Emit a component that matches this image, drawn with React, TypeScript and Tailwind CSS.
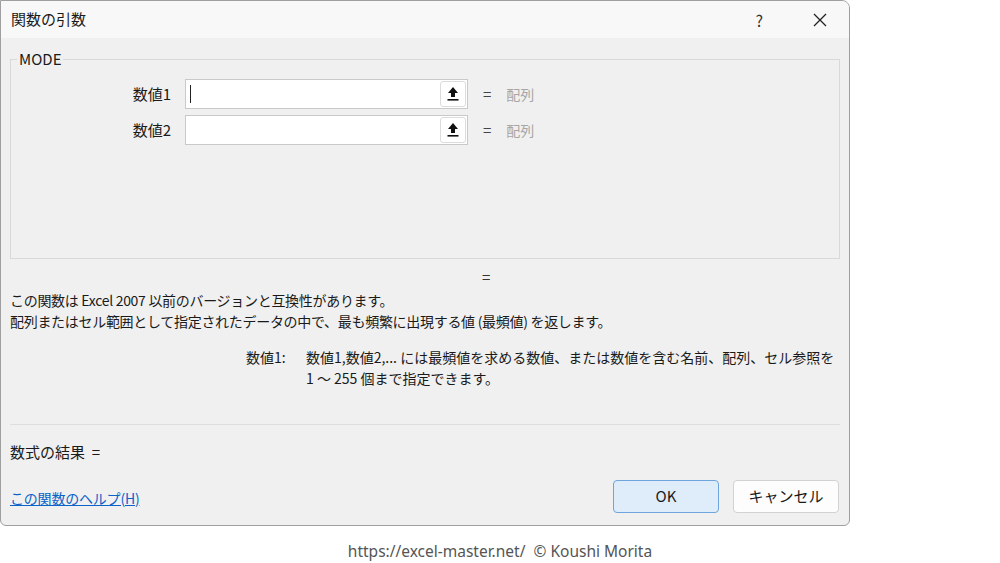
import React from "react";

const FONT = {
  fontFamily: '"Noto Sans CJK JP", "Noto Sans", sans-serif',
};

function UploadIcon() {
  return (
    <svg width="12" height="16" viewBox="0 0 12 16" aria-hidden>
      <path d="M6 1 L11 7 H8 V11 H4 V7 H1 Z" fill="#111" />
      <rect x="0.5" y="13" width="11" height="1.6" fill="#111" />
    </svg>
  );
}

function ArgRow({ label, caret }: { label: string; caret?: boolean }) {
  return (
    <div className="flex items-center h-[30px]">
      <div className="w-[174px] pr-[14px] text-right text-[15px] text-[#1a1a1a]">
        {label}
      </div>
      <div className="flex w-[283px] h-[30px] items-stretch border border-[#c9c9c9] bg-white">
        <div className="flex flex-1 items-center pl-[4px]">
          {caret && <div className="h-[18px] w-px bg-[#222]" />}
        </div>
        <div className="m-[1px] flex w-[26px] items-center justify-center rounded-[3px] border border-[#dcdcdc] bg-white">
          <UploadIcon />
        </div>
      </div>
      <span className="ml-[15px] text-[15px] text-[#444]">=</span>
      <span className="ml-[15px] text-[14px] text-[#a6a6a6]">配列</span>
    </div>
  );
}

export default function App() {
  return (
    <div className="w-[1000px] h-[563px] bg-white" style={FONT}>
      <div className="flex h-[526px] w-[850px] flex-col overflow-hidden rounded-tr-[8px] rounded-b-[6px] border border-[#9f9f9f] bg-[#f0f0f0]">
        {/* Title bar */}
        <div className="flex h-[37px] shrink-0 items-center bg-[#f8f8f8]">
          <span className="ml-[10px] text-[15px] text-[#1a1a1a]">関数の引数</span>
          <span className="ml-auto text-[16px] text-[#333]">?</span>
          <svg className="ml-[50px] mr-[22px]" width="14" height="14" viewBox="0 0 14 14">
            <path d="M1 1 L13 13 M13 1 L1 13" stroke="#222" strokeWidth="1.3" />
          </svg>
        </div>

        <div className="flex flex-1 flex-col px-[9px]">
          <fieldset className="mt-[11px] h-[210px] border border-[#d9d9d9]">
            <legend className="ml-[6px] px-[2px] text-[15px] leading-[20px] text-[#1a1a1a]">
              MODE
            </legend>
            <div className="mt-[10px] flex flex-col gap-[6px]">
              <ArgRow label="数値1" caret />
              <ArgRow label="数値2" />
            </div>
          </fieldset>

          <div className="mt-[8px] h-[20px] pl-[472px] text-[15px] leading-[20px] text-[#333]">=</div>

          <div className="mt-[3px] text-[14px] leading-[21px] tracking-[-0.3px] text-[#1a1a1a]">
            <p>この関数は Excel 2007 以前のバージョンと互換性があります。</p>
            <p>配列またはセル範囲として指定されたデータの中で、最も頻繁に出現する値 (最頻値) を返します。</p>
          </div>

          <div className="mt-[15px] flex text-[14px] leading-[21px] text-[#1a1a1a]">
            <div className="w-[296px] pl-[236px]">数値1:</div>
            <div>
              <p>数値1,数値2,... には最頻値を求める数値、または数値を含む名前、配列、セル参照を</p>
              <p>1 ～ 255 個まで指定できます。</p>
            </div>
          </div>

          <div className="mt-[35px] border-t border-[#dedede]" />

          <div className="mt-[16px] text-[15px] leading-[21px] text-[#1a1a1a]">数式の結果&nbsp;&nbsp;=</div>

          <div className="mt-[18px] flex items-center">
            <a href="#" className="mt-[3px] text-[14px] tracking-[-0.2px] text-[#0b63c9] underline">
              この関数のヘルプ(H)
            </a>
            <button className="ml-auto h-[33px] w-[106px] rounded-[4px] border border-[#6ea5dc] bg-[#dfecf9] text-[15px] text-[#1a1a1a]">
              OK
            </button>
            <button className="ml-[14px] mr-[1px] h-[33px] w-[106px] rounded-[4px] border border-[#d2d2d2] bg-[#fdfdfd] text-[15px] text-[#1a1a1a]">
              キャンセル
            </button>
          </div>
        </div>
      </div>
      <div className="mt-[14px] text-center text-[15.5px] text-[#555]" style={{ fontFamily: '"Noto Sans", sans-serif' }}>
        https://excel-master.net/&nbsp;&nbsp;© Koushi Morita
      </div>
    </div>
  );
}
